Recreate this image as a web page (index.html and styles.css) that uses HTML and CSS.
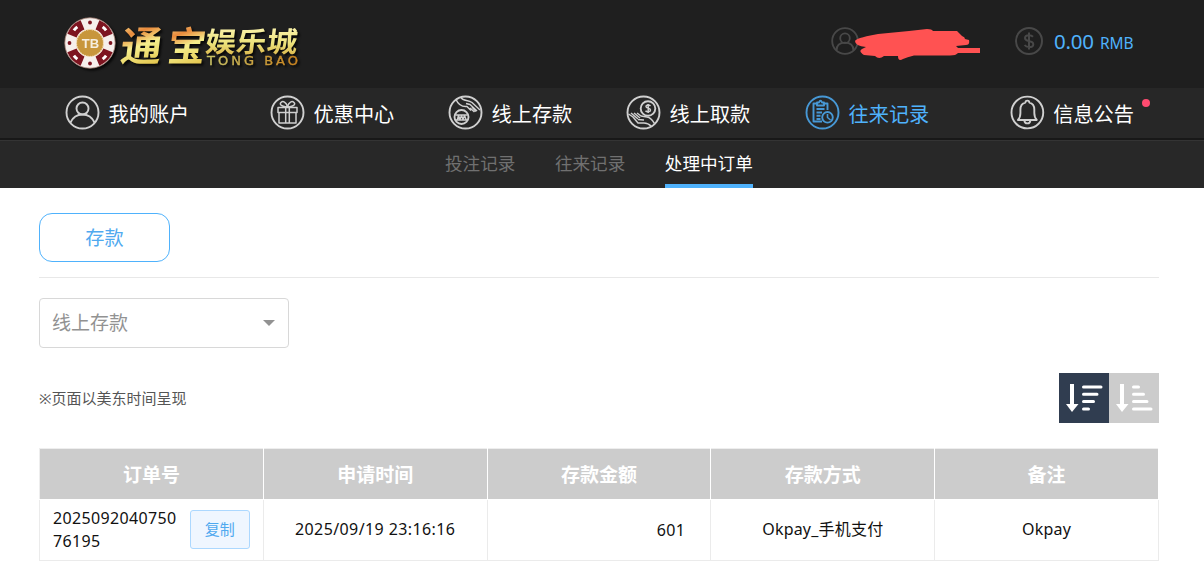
FILE: index.html
```html
<!DOCTYPE html>
<html lang="zh-CN">
<head>
<meta charset="utf-8">
<title>处理中订单</title>
<link rel="stylesheet" href="styles.css">
</head>
<body>
<header class="topbar">
  <svg class="logo" width="240" height="60" viewBox="0 0 240 60">
    <defs>
      <linearGradient id="gold" x1="0" y1="0" x2="0.25" y2="1">
        <stop offset="0.1" stop-color="#f7f0a0"/><stop offset="0.38" stop-color="#e98a3c"/><stop offset="0.62" stop-color="#f6ef8d"/><stop offset="1" stop-color="#e3c64f"/>
      </linearGradient>
      <linearGradient id="gold2" x1="0" y1="0" x2="0" y2="1">
        <stop offset="0.2" stop-color="#fbf3ac"/><stop offset="0.6" stop-color="#ece27a"/><stop offset="1" stop-color="#d3a53b"/>
      </linearGradient>
      <linearGradient id="gold3"><stop offset="0" stop-color="#c9c568"/><stop offset="1" stop-color="#c9821e"/></linearGradient>
    </defs>
    <circle cx="26" cy="29" r="25.2" fill="#f6efec" stroke="#a88478" stroke-width="0.8"/>
    <circle cx="26" cy="29" r="19.5" fill="none" stroke="#7d1420" stroke-width="10" pathLength="80" stroke-dasharray="10 10" stroke-dashoffset="-5"/>
    <circle cx="26" cy="29" r="20.5" fill="none" stroke="#fff" stroke-width="3" pathLength="80" stroke-dasharray="3 17" stroke-dashoffset="-8.5"/>
    <g fill="#7d1420"><circle cx="26" cy="8.500" r="1.9"/><circle cx="26" cy="49.500" r="1.9"/><circle cx="5.500" cy="29" r="1.9"/><circle cx="46.500" cy="29" r="1.9"/></g>
    <circle cx="26" cy="29" r="13.500" fill="#c8963c" stroke="#f4dfbc" stroke-width="1.2" stroke-dasharray="1.5 1"/>
    <text class="chip-text" x="26.500" y="33.500" text-anchor="middle">TB</text>
    <g class="logo-text">
      <g transform="translate(7 0) skewX(-7)">
        <text x="54" y="47" font-size="41" textLength="41" lengthAdjust="spacingAndGlyphs" fill="url(#gold)">通</text>
        <text x="101" y="47" font-size="40" textLength="38" lengthAdjust="spacingAndGlyphs" fill="url(#gold)">宝</text>
        <text class="light" x="138" y="38" font-size="28" textLength="92" lengthAdjust="spacingAndGlyphs" fill="url(#gold2)">娱乐城</text>
      </g>
      <text class="latin" x="143" y="50.500" textLength="91" fill="url(#gold3)" stroke="url(#gold3)" stroke-width="0.4">TONG BAO</text>
    </g>
  </svg>
  <div class="user">
    <svg class="round-icon" width="28" height="28" viewBox="0 0 35 35"><circle cx="17.5" cy="17.5" r="16"/><circle cx="17.5" cy="14" r="6"/><path d="M7 29c0-6 4-9.5 10.5-9.5S28 23 28 29"/></svg>
    <svg class="scribble" width="126" height="32" viewBox="855 29 126 32"><path d="M855 41 C856 38 868 36 878 34 L909 31 927 29 Q932 29 933 31 L957 31 Q960 34 962 36 Q965 37 965 39 L969 40 Q970 45 966 45 L956 46 958 48H980V53H958Q956 55.5 950 55.5H914Q907 57 903 59 Q898 62 898 56 L884 56Q879 60 875 56L864 55Q858 51 862 49 L866 47Q855 46 855 41Z"/></svg>
  </div>
  <div class="balance">
    <svg class="round-icon dollar" width="28" height="28" viewBox="0 0 28 28"><circle cx="14" cy="14" r="13"/><path d="M18 9.8Q16.5 8.2 14 8.2 10 8.2 10 11 10 13.3 14 14 18.3 14.8 18.3 17.4 18.3 20 14 20 11 20 9.6 18M14 5.5V22.5"/></svg>
    <span class="amount">0.00</span><span class="currency">RMB</span>
  </div>
</header>

<nav class="main-nav">
  <a class="nav-item"><svg viewBox="0 0 35 35"><circle cx="17.5" cy="17.5" r="16"/><circle cx="17.5" cy="13.5" r="6"/><path d="M5.5 27.5C8 22 12 19.5 17.5 19.5S27 22 29.5 27.5"/></svg><span>我的账户</span></a>
  <a class="nav-item"><svg viewBox="0 0 35 35"><circle cx="17.5" cy="17.5" r="16"/><path stroke-width="1.5" d="M8 12.5H27V17.5H8ZM9 17.5V28H26V17.5M15.7 12.5V28M19.3 12.5V28M17.5 12C10 11 9.5 9 11 7.5 13 5.500 16 7 17.500 11.500 19 7 22 5.500 24 7.500 25.500 9 25 11 17.500 12"/></svg><span>优惠中心</span></a>
  <a class="nav-item"><svg viewBox="0 0 35 35"><circle cx="17.500" cy="17.500" r="16"/><circle cx="13.500" cy="22" r="7"/><path stroke-width="1.500" d="M8 4.500C10 9 14 12 19 11.500L23 15.500M13 2.500C15 6.500 20 4.500 24 7.500L32 15M18 8.500 22 9.500 29 16M22 13 26.500 17M24 12 28 16.500M7.500 20H19.500M7 25H20M9.500 24.500 10.500 20.500 12 24.500 13.500 20.500 15 24.500 16.500 20.500 18 24.500"/></svg><span>线上存款</span></a>
  <a class="nav-item"><svg viewBox="0 0 35 35"><circle cx="17.500" cy="17.500" r="16"/><circle cx="22" cy="13.500" r="7.300"/><path stroke-width="1.500" d="M24.500 10.800C22.500 9.200 19.800 10 20 11.700 20.300 13.800 24.500 12.800 24.500 15 24.500 17 21 17.500 19.500 15.800M22.200 9V18M2.500 19 7 22 12 28 18 28C21 28 24 30 25.500 31.500M5 18 12 24M8 18 14 23M11 18 15 21 21 22C25 22.500 27 26 28.500 28.500M12 24.500 18 25"/></svg><span>线上取款</span></a>
  <a class="nav-item active"><svg viewBox="0 0 35 35"><circle cx="17.500" cy="17.500" r="16"/><path stroke-width="1.900" d="M12 8.500H8.500V26.500H17M19 8.500H22.500V15M12 10.500V7.500H14Q15.500 4 17 7.500H19V10.500ZM11.500 14H19.500M11.500 17.500H17M11.500 20.800H15.500M11.500 24H15.500"/><circle cx="22.500" cy="22.300" r="5.300"/><path stroke-width="1.600" d="M22.500 19V22.500L25.500 25"/></svg><span>往来记录</span></a>
  <a class="nav-item"><svg viewBox="0 0 35 35"><circle cx="17.500" cy="17.500" r="16"/><path d="M8 25Q10.500 22.500 10.500 18V14.500Q10.500 8.500 15.500 7.500 15.500 5.500 17.500 5.500T19.500 7.500Q24.500 8.500 24.500 14.500V18Q24.500 22.500 27 25ZM14.500 25Q14.500 28.500 17.500 28.500T20.500 25"/></svg><span>信息公告</span><i class="dot"></i></a>
</nav>

<nav class="sub-nav">
  <a>投注记录</a><a>往来记录</a><a class="current">处理中订单</a>
</nav>

<main class="content">
  <div class="tabs"><button class="tab">存款</button></div>
  <div class="select"><span>线上存款</span><i class="caret"></i></div>
  <div class="toolbar">
    <p class="note">※页面以美东时间呈现</p>
    <div class="sort">
      <svg class="sort-btn on" viewBox="0 0 50 50"><path d="M11 11h4v20h4.500L13 39 7 31h4z"/><path class="bars" d="M24.500 14H42M24.500 21.300H38M24.500 28.600H34.500M24.500 36H29.500"/></svg>
      <svg class="sort-btn" viewBox="0 0 50 50"><path d="M11 11h4v20h4.500L13 39 7 31h4z"/><path class="bars" d="M24.500 14H29.500M24.500 21.300H34.500M24.500 28.600H38M24.500 36H42"/></svg>
    </div>
  </div>
  <table class="orders">
    <thead><tr><th>订单号</th><th>申请时间</th><th>存款金额</th><th>存款方式</th><th>备注</th></tr></thead>
    <tbody><tr>
      <td><div class="order-no"><span>2025092040750<br>76195</span><button class="copy">复制</button></div></td>
      <td class="num">2025/09/19 23:16:16</td>
      <td class="money">601</td>
      <td>Okpay_手机支付</td>
      <td>Okpay</td>
    </tr></tbody>
  </table>
</main>
</body>
</html>
```
FILE: styles.css
```css
* { box-sizing: border-box; }
body {
  margin: 0;
  background: #fff;
  color: #111;
  font-family: "Noto Sans", "Noto Sans CJK SC", sans-serif;
  font-size: 16px;
}
button { font: inherit; padding: 0; }

.topbar {
  display: flex;
  height: 88px;
  padding: 14px 0 0 64px;
  background: #1f1f1f;
}
.logo { flex: none; overflow: visible; filter: drop-shadow(2px 2px 1px #080808); }
.logo-text { font-family: "Noto Sans CJK SC", sans-serif; font-weight: 700; }
.latin { font-family: "DejaVu Sans", sans-serif; font-size: 13px; font-weight: 400; }
.chip-text { font: 700 13px "Liberation Sans", sans-serif; fill: #f6eee0; }
.round-icon { flex: none; fill: none; stroke: #484848; stroke-width: 2.3; }
.dollar { stroke-width: 2; }
.user { display: flex; width: 184px; margin: 13px 0 0 527px; }
.scribble { flex: none; margin: 2px 0 0 -4px; fill: #ff5252; }
.balance {
  display: flex;
  height: 28px;
  margin-top: 13px;
  line-height: 28px;
  color: #4fb2fc;
}
.amount { width: 46px; margin-left: 11px; font-size: 20.500px; letter-spacing: -0.200px; }
.currency { padding-top: 2px; font-size: 15.500px; letter-spacing: -0.100px; }

.main-nav {
  display: grid;
  grid-template-columns: 205px 178px 178px 179px 205px 124px;
  align-items: center;
  height: 52px;
  padding: 0 0 2px 65px;
  background: #272727;
  border-bottom: 2px solid #181818;
  color: #fff;
}
.nav-item { display: flex; align-items: center; position: relative; font-size: 20.200px; line-height: 30px; }
.nav-item svg { width: 35px; height: 35px; margin-right: 8.500px; fill: none; stroke: #d0d0d0; stroke-width: 1.9; stroke-linejoin: round; }
.nav-item span { padding-top: 3px; white-space: nowrap; }
.nav-item.active { color: #4fb2fc; }
.nav-item.active svg { stroke: #4798d5; }
.dot { position: absolute; top: 4px; left: 132px; width: 8px; height: 8px; border-radius: 50%; background: #ff4b70; }

.sub-nav {
  display: flex;
  gap: 39.500px;
  height: 48px;
  padding-left: 445px;
  background: #282828;
  border-top: 1px solid #343434;
  color: #707070;
  font-size: 17.600px;
  line-height: 44px;
}
.sub-nav .current { height: 47px; border-bottom: 4px solid #4fb2fc; color: #fff; }

.content { width: 1120px; margin: 0 0 0 39px; padding-top: 25px; }
.tabs { height: 65px; border-bottom: 1px solid #e8e8e8; }
.tab {
  display: block;
  width: 131px;
  height: 49px;
  padding-bottom: 2px;
  border: 1px solid #4fb2fc;
  border-radius: 13px;
  background: #fff;
  color: #4fa9ef;
  font-size: 19.200px;
}
.select {
  display: flex;
  align-items: center;
  justify-content: space-between;
  width: 250px;
  height: 50px;
  margin-top: 20px;
  padding: 0 13px 0 12px;
  border: 1px solid #d8d8d8;
  border-radius: 4px;
  color: #929292;
  font-size: 19px;
}
.select span { padding-bottom: 2px; }
.caret { border: 6px solid transparent; border-top-color: #929292; border-bottom: 0; }
.toolbar { display: flex; align-items: center; justify-content: space-between; height: 50px; margin: 25px 0; }
.note { margin: 0; padding-bottom: 2px; color: #555; font-size: 15px; }
.sort { display: flex; }
.sort-btn { width: 50px; height: 50px; background: #ccc; fill: #fff; }
.sort-btn.on { background: #303d50; }
.bars { stroke: #fff; stroke-width: 3; stroke-linecap: round; }

.orders { width: 1120px; table-layout: fixed; border-collapse: collapse; text-align: center; }
.orders th { height: 51px; padding: 1px 0 0; border: 1px solid #fff; border-top-color: #eee; border-left-color: #eee; background: #ccc; color: #fff; font-size: 19px; font-weight: 700; line-height: 28px; }
.orders td { height: 61px; padding: 0 0 2px; border: 1px solid #ebebeb; line-height: 23px; letter-spacing: 0.2px; }
.orders .num { letter-spacing: 0.400px; }
.orders .money { padding: 1px 25px 0 0; text-align: right; letter-spacing: 0.400px; }
.order-no { display: flex; align-items: center; justify-content: space-between; padding: 0 13px; text-align: left; letter-spacing: 0.350px; }
.order-no span { padding-top: 2px; }
.copy { width: 60px; height: 39px; border: 1px solid #acd8ff; border-radius: 3px; background: #eff6ff; color: #4fa9ef; font-size: 15px; }
```
